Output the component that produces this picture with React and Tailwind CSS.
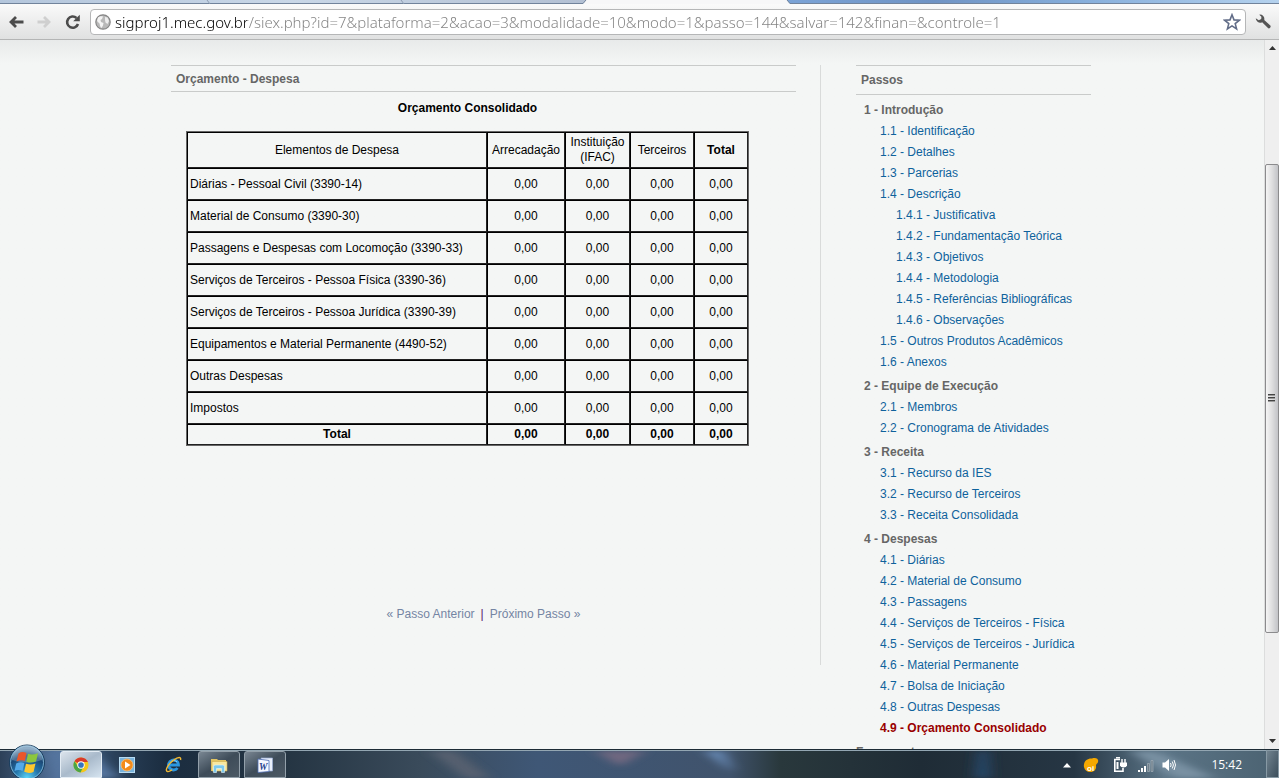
import React, { useState } from 'react';

const rows = [
  'Diárias - Pessoal Civil (3390-14)',
  'Material de Consumo (3390-30)',
  'Passagens e Despesas com Locomoção (3390-33)',
  'Serviços de Terceiros - Pessoa Física (3390-36)',
  'Serviços de Terceiros - Pessoa Jurídica (3390-39)',
  'Equipamentos e Material Permanente (4490-52)',
  'Outras Despesas',
  'Impostos',
];

const columns = ['arrecadacao', 'instituicao', 'terceiros', 'total'];

const sections = [
  {
    title: '1 - Introdução',
    items: [
      { label: '1.1 - Identificação' },
      { label: '1.2 - Detalhes' },
      { label: '1.3 - Parcerias' },
      { label: '1.4 - Descrição' },
      { label: '1.4.1 - Justificativa', nested: true },
      { label: '1.4.2 - Fundamentação Teórica', nested: true },
      { label: '1.4.3 - Objetivos', nested: true },
      { label: '1.4.4 - Metodologia', nested: true },
      { label: '1.4.5 - Referências Bibliográficas', nested: true },
      { label: '1.4.6 - Observações', nested: true },
      { label: '1.5 - Outros Produtos Acadêmicos' },
      { label: '1.6 - Anexos' },
    ],
  },
  {
    title: '2 - Equipe de Execução',
    items: [{ label: '2.1 - Membros' }, { label: '2.2 - Cronograma de Atividades' }],
  },
  {
    title: '3 - Receita',
    items: [
      { label: '3.1 - Recurso da IES' },
      { label: '3.2 - Recurso de Terceiros' },
      { label: '3.3 - Receita Consolidada' },
    ],
  },
  {
    title: '4 - Despesas',
    items: [
      { label: '4.1 - Diárias' },
      { label: '4.2 - Material de Consumo' },
      { label: '4.3 - Passagens' },
      { label: '4.4 - Serviços de Terceiros - Física' },
      { label: '4.5 - Serviços de Terceiros - Jurídica' },
      { label: '4.6 - Material Permanente' },
      { label: '4.7 - Bolsa de Iniciação' },
      { label: '4.8 - Outras Despesas' },
      { label: '4.9 - Orçamento Consolidado', current: true },
    ],
  },
];

const TabStrip = () => (
  <div className="flex h-1 shrink-0 bg-[#f7f7f8]">
    <svg className="h-1 w-full" viewBox="0 0 1279 4" preserveAspectRatio="none">
      <defs>
        <linearGradient id="tabs" x1="0" x2="1" y1="0" y2="0">
          <stop offset="0" stopColor="#b4c6dc" />
          <stop offset=".5" stopColor="#c9d7e7" />
          <stop offset="1" stopColor="#b3c0d3" />
        </linearGradient>
        <linearGradient id="glass" x1="0" x2="1" y1="0" y2="0">
          <stop offset="0" stopColor="#7ba3d6" />
          <stop offset=".3" stopColor="#6f93c4" />
          <stop offset=".6" stopColor="#86aedb" />
          <stop offset="1" stopColor="#b5d2ee" />
        </linearGradient>
      </defs>
      <path d="M0 0H586L583 4H0z" fill="url(#tabs)" />
      <path d="M787 0H1279V4H790z" fill="url(#glass)" />
      <path d="M0 3.5H583L586 0M787 0L790 3.5H1279" stroke="#71839b" fill="none" />
      <path d="M207 0l3 4M401 0l3 4" stroke="#8e9db2" />
    </svg>
  </div>
);

const Toolbar = () => {
  const [url, setUrl] = useState(
    'sigproj1.mec.gov.br/siex.php?id=7&plataforma=2&acao=3&modalidade=10&modo=1&passo=144&salvar=142&finan=&controle=1'
  );

  return (
    <div className="flex h-9 shrink-0 items-center border-b border-[#b4b5b5] bg-linear-to-b from-[#fafafa] to-[#e0e1e1] pr-2 pl-2">
      <button type="button" aria-label="Voltar" className="flex h-6 w-7 items-center">
        <svg width="16" height="16" viewBox="0 0 16 16" fill="none" stroke="#4c4c4c" strokeWidth="2.8">
          <path d="M8 3L3 8L8 13M2.5 8H15.5" />
        </svg>
      </button>
      <button type="button" aria-label="Avançar" className="flex h-6 w-7 items-center">
        <svg width="16" height="16" viewBox="0 0 16 16" fill="none" stroke="#cfcfcf" strokeWidth="2.8">
          <path d="M8 3L13 8L8 13M13.5 8H1.5" />
        </svg>
      </button>
      <button type="button" aria-label="Recarregar" className="flex h-6 w-6 items-center">
        <svg width="17" height="16" viewBox="0 0 17 16">
          <path d="M12.5 4A5.6 5.6 0 1 0 14 10" fill="none" stroke="#4c4c4c" strokeWidth="2.6" />
          <path d="M15.8 .8V7.2H9.200z" fill="#4c4c4c" />
        </svg>
      </button>
      <div className="ml-0.5 flex h-[26px] min-w-0 flex-1 items-center rounded border border-[#b5b6b7] bg-white px-1">
        <svg width="16" height="16" viewBox="0 0 16 16" className="shrink-0">
          <circle cx="8" cy="8" r="7.2" fill="#b9b9b9" stroke="#858585" strokeWidth="1.2" />
          <path d="M3 3.5C5 1.8 7 2 8 2.5L7 5L5.500 6L6 8L8.500 9L8 11.500L6.500 14C5 13 5 11 4.500 9.500L2 7z" fill="#f4f4f4" />
          <path d="M10 3L12.500 3.500L14 7L12.500 10L10.500 8.500L10 6z" fill="#eeeeee" />
        </svg>
        <input
          type="text"
          aria-label="Endereço"
          value={url}
          onChange={(e) => setUrl(e.target.value)}
          className="ml-1 h-6 min-w-0 flex-1 bg-linear-to-r from-black from-[132px] to-[#808080] to-[132px] bg-clip-text font-['Noto_Sans',sans-serif] text-[15px] font-light text-transparent caret-black outline-none"
        />
        <button type="button" aria-label="Adicionar aos favoritos">
          <svg width="18" height="18" viewBox="0 0 18 18" fill="#fff" stroke="#626d88" strokeWidth="1.6">
            <path d="M9 1.8L11 6.900L16.400 7.200L12.200 10.600L13.600 15.900L9 12.900L4.400 15.900L5.800 10.600L1.600 7.200L7 6.900z" />
          </svg>
        </button>
      </div>
      <button type="button" aria-label="Ferramentas" className="ml-[9px] flex w-4 shrink-0">
        <svg width="17" height="17" viewBox="0 0 17 17">
          <path d="M4.5 1.2A4.700 4.700 0 0 1 9.800 7L16 12.600A1.700 1.700 0 0 1 13.500 15.200L7.600 9.300A4.700 4.700 0 0 1 .8 5L4 7.200L6.600 5.800L6.800 3.400z" fill="#555" />
        </svg>
      </button>
    </div>
  );
};

const cellClass = 'border border-t-black border-r-[#222] border-b-[#222] border-l-black';

const Budget = () => (
  <main className="w-[625px] shrink-0">
    <h2 className="border-y border-[#c9cbca] px-[5px] pt-[5px] pb-1 text-xs leading-4 font-bold text-[#666]">
      Orçamento - Despesa
    </h2>
    <div className="ml-[15px] w-[563px]">
      <h3 className="mt-2 mb-[15px] text-center text-xs leading-4 font-bold">Orçamento Consolidado</h3>
      <table className="w-full table-fixed border-separate border-spacing-0 border border-[#666] text-center text-xs leading-[15px]">
        <colgroup>
          <col className="w-[300px]" />
          <col className="w-[78px]" />
          <col className="w-[65px]" />
          <col className="w-[64px]" />
          <col />
        </colgroup>
        <thead>
          <tr className="h-9">
            <th className={`${cellClass} font-normal`}>Elementos de Despesa</th>
            <th className={`${cellClass} font-normal`}>Arrecadação</th>
            <th className={`${cellClass} font-normal`}>
              Instituição
              <br />
              (IFAC)
            </th>
            <th className={`${cellClass} font-normal`}>Terceiros</th>
            <th className={`${cellClass} font-bold`}>Total</th>
          </tr>
        </thead>
        <tbody>
          {rows.map((row) => (
            <tr key={row} className="h-8">
              <td className={`${cellClass} pl-0.5 text-left whitespace-nowrap`}>{row}</td>
              {columns.map((col) => (
                <td key={col} className={cellClass}>0,00</td>
              ))}
            </tr>
          ))}
        </tbody>
        <tfoot>
          <tr className="h-[21px] font-bold">
            <td className={cellClass}>Total</td>
            {columns.map((col) => (
              <td key={col} className={cellClass}>0,00</td>
            ))}
          </tr>
        </tfoot>
      </table>
    </div>
    <nav className="mt-40 mb-[43px] flex justify-center gap-1.5 text-xs leading-4 text-[#7485a3]">
      <a href="#anterior">« Passo Anterior</a>
      <span className="text-[#551a6b]">|</span>
      <a href="#proximo">Próximo Passo »</a>
    </nav>
  </main>
);

const Steps = () => (
  <aside className="w-[235px] shrink-0 text-xs">
    <h2 className="mb-[5px] border-y border-[#c9cbca] px-[5px] py-[6px] leading-4 font-bold text-[#666]">Passos</h2>
    {sections.map((section) => (
      <section key={section.title} className="mb-[3px] pl-2 leading-[21px] whitespace-nowrap">
        <h3 className="font-bold text-[#666]">{section.title}</h3>
        <ul className="pl-4">
          {section.items.map((item) => (
            <li key={item.label} className={item.nested ? 'pl-4' : ''}>
              <a href="#passo" className={item.current ? 'font-bold text-[#990000]' : 'text-[#0e629c]'}>
                {item.label}
              </a>
            </li>
          ))}
        </ul>
      </section>
    ))}
    <h2 className="leading-[21px] font-bold text-[#666]">Ferramentas</h2>
  </aside>
);

const Scrollbar = () => (
  <div className="flex w-[15px] shrink-0 flex-col border-l border-[#dcdddd] bg-[#efefef]">
    <div className="flex h-4 items-center justify-center">
      <svg width="7" height="4" viewBox="0 0 7 4"><path d="M3.5 0L7 4H0z" fill="#333" /></svg>
    </div>
    <div className="flex-[108]" />
    <div className="flex flex-[469] items-center justify-center rounded-[2px] border border-[#8b8b8d] bg-linear-to-r from-[#f5f5f5] via-[#dededf] to-[#c2c3c7]">
      <svg width="8" height="9" viewBox="0 0 8 9"><path d="M0 .5h7M0 3.500h7M0 6.500h7" stroke="#444" /><path d="M0 1.500h7M0 4.500h7M0 7.500h7" stroke="#999" /></svg>
    </div>
    <div className="flex-[100]" />
    <div className="flex h-4 items-center justify-center">
      <svg width="7" height="4" viewBox="0 0 7 4"><path d="M0 0H7L3.500 4z" fill="#333" /></svg>
    </div>
  </div>
);

const ChromeIcon = () => (
  <svg width="16" height="16" viewBox="0 0 16 16">
    <circle cx="8" cy="8" r="7.5" fill="#f5c71c" />
    <path d="M8 8L1.500 4.200A7.500 7.500 0 0 1 14.900 5H8z" fill="#d93a2b" />
    <path d="M1.500 4.200A7.500 7.500 0 0 0 7.500 15.500L10.500 9.500L5 9.500z" fill="#4aa546" />
    <circle cx="8" cy="8" r="3.7" fill="#fff" />
    <circle cx="8" cy="8" r="2.8" fill="#3573c0" />
  </svg>
);

const PlayerIcon = () => (
  <svg width="16" height="16" viewBox="0 0 16 16">
    <rect x=".5" y=".5" width="15" height="15" fill="#79b3dc" stroke="#b7dbf2" />
    <circle cx="8" cy="8" r="6" fill="#f38b1a" stroke="#fbc27a" strokeWidth=".8" />
    <path d="M6 4.500L11.500 8L6 11.500z" fill="#fff" />
  </svg>
);

const ExplorerIcon = () => (
  <svg width="17" height="17" viewBox="0 0 17 17" fill="none">
    <path d="M4.500 9H13.500A5 5 0 1 0 12.500 12" stroke="#2b96df" strokeWidth="2.8" />
    <path d="M5 7A4.200 4.200 0 0 1 12 6" stroke="#8fd3fa" strokeWidth="1" />
    <path d="M2.500 15.500C-1 15 4 7 9 3.800C13 .8 16.500 .5 15.500 4M2.500 15.500C4 16 6 14.500 7 13.800" stroke="#f0b833" strokeWidth="1.4" />
  </svg>
);

const FolderIcon = () => (
  <svg width="18" height="16" viewBox="0 0 18 16">
    <path d="M1 2H7L8 3H16V14H1z" fill="#e3c563" />
    <path d="M2 4.500H17V14H2z" fill="#f8e8a0" stroke="#cfac4d" strokeWidth=".6" />
    <path d="M3.500 15.500V9.500Q3.500 8 5 8H13Q14.500 8 14.500 9.500V15.500H11.500V11.500H6.500V15.500z" fill="#7cc9ec" stroke="#e2f5fd" strokeWidth=".6" />
  </svg>
);

const WordIcon = () => (
  <svg width="17" height="16" viewBox="0 0 17 16">
    <path d="M4 1H15.500V14H6z" fill="#e9effa" stroke="#9aadd6" strokeWidth=".7" />
    <path d="M1 2L12 3.500V14.500L1 15.500z" fill="#f5f8ff" stroke="#4d6cb3" strokeWidth=".8" />
    <text x="2" y="12.5" fontSize="9.5" fontWeight="bold" fontStyle="italic" fontFamily="Liberation Serif, serif" fill="#24418e">W</text>
  </svg>
);

const taskClass = 'flex h-full w-[42px] items-center justify-center rounded-t-[3px] border';

const Taskbar = () => (
  <footer className="relative flex h-[29px] shrink-0 items-stretch border-t border-[#1c2b35] bg-linear-to-r from-[#3d5775] via-[#42597a] via-45% to-[#4d6474] font-['Open_Sans',sans-serif]">
    {/* blurred wallpaper seen through the bar */}
    <svg className="absolute inset-0 h-full w-full border-t border-[#93a6b2]" viewBox="0 0 1279 28" preserveAspectRatio="none">
      <defs>
        <filter id="soft" x="-20%" y="-50%" width="140%" height="200%"><feGaussianBlur stdDeviation="7 3" /></filter>
        <linearGradient id="wall" x1="0" x2="1" y1="0" y2="0">
          <stop offset="0" stopColor="#2c4058" />
          <stop offset=".045" stopColor="#52719a" />
          <stop offset=".09" stopColor="#294059" />
          <stop offset=".13" stopColor="#1b2d40" />
          <stop offset=".22" stopColor="#243442" />
          <stop offset=".33" stopColor="#3a4b5b" />
          <stop offset=".42" stopColor="#3f5776" />
          <stop offset=".57" stopColor="#40536c" />
          <stop offset=".61" stopColor="#29383c" />
          <stop offset=".72" stopColor="#1f2c36" />
          <stop offset=".84" stopColor="#263644" />
          <stop offset=".91" stopColor="#5b7486" />
          <stop offset="1" stopColor="#4b6271" />
        </linearGradient>
      </defs>
      <rect width="1279" height="28" fill="url(#wall)" />
      <g filter="url(#soft)">
        <path d="M430 0H455L490 28H465z" fill="#56616f" />
        <path d="M595 0H645L620 16z" fill="#6f6880" />
        <path d="M705 0H722L733 22z" fill="#6c90bd" />
        <path d="M978 0H988L990 28H975z" fill="#28486c" />
        <path d="M1130 0H1155L1215 28H1175z" fill="#7991a3" />
        <path d="M45 0H90L120 28H60z" fill="#54749e" />
      </g>
    </svg>

    <button type="button" aria-label="Iniciar" className="absolute -top-[6px] left-2">
      <svg width="38" height="36" viewBox="0 0 38 36">
        <defs>
          <radialGradient id="orb" cx=".5" cy=".95" r=".85">
            <stop offset="0" stopColor="#5ed8fa" />
            <stop offset=".4" stopColor="#2476ac" />
            <stop offset=".75" stopColor="#1b4876" />
            <stop offset="1" stopColor="#7399b9" />
          </radialGradient>
        </defs>
        <circle cx="19" cy="18.5" r="17.5" fill="url(#orb)" stroke="#1a3e5e" />
        <circle cx="19" cy="18.5" r="16.5" fill="none" stroke="#8ec3e0" strokeWidth=".8" />
        <path d="M4 16A15 15 0 0 1 34 16Q19 21 4 16z" fill="#fff" opacity=".22" />
        <path d="M10.500 9.500Q14 7 18.500 9L16.800 17Q13 15.500 8.500 17.500z" fill="#e9562a" />
        <path d="M20 9.800Q24.500 11.500 30 9.200L28 17.500Q23 19.500 18.300 17.700z" fill="#8cc63d" />
        <path d="M8.200 19.500Q12.500 17.200 16.400 19L14.600 27Q10.500 25.200 6.500 27z" fill="#55a9e8" />
        <path d="M18 19.800Q22.800 21.500 27.500 19.500L25.500 28Q21 30 16.200 27.800z" fill="#fdc82f" />
      </svg>
    </button>

    <div className="relative ml-[60px] flex gap-1 pt-px">
      <button type="button" aria-label="Google Chrome" className={`${taskClass} border-[#e3ecf4] bg-linear-to-br from-[#dce4ec] via-[#a9bacb] to-[#d5e3ef]`}>
        <ChromeIcon />
      </button>
      <button type="button" aria-label="Media Player" className={`${taskClass} border-transparent`}>
        <PlayerIcon />
      </button>
      <button type="button" aria-label="Internet Explorer" className={`${taskClass} border-transparent`}>
        <ExplorerIcon />
      </button>
      <button type="button" aria-label="Windows Explorer" className={`${taskClass} border-[#93a0aa] bg-linear-to-br from-[#7a8793] via-[#3e4c59] to-[#4c5964]`}>
        <FolderIcon />
      </button>
      <button type="button" aria-label="Word" className={`${taskClass} border-[#93a0aa] bg-linear-to-br from-[#7a8793] via-[#3e4c59] to-[#4c5964]`}>
        <WordIcon />
      </button>
    </div>

    <div className="relative ml-auto flex items-center pt-0.5 text-white">
      <svg width="8" height="5" viewBox="0 0 8 5" className="mr-3"><path d="M4 0L8 4.500H0z" fill="#fff" /></svg>
      <svg width="16" height="16" viewBox="0 0 16 16" className="mr-[14px]">
        <path d="M1 10C0 5 4 1 9 1.500C13 0 16 2 15 5C14.500 7 13 6.500 13 9C13.500 11 12.500 13.500 10 14.500C6 16 2 14.500 1 10z" fill="#f5a800" />
        <text x="4" y="14" fontSize="8" fontWeight="bold" fontFamily="Liberation Sans, sans-serif" fill="#fff">oi</text>
      </svg>
      <svg width="15" height="16" viewBox="0 0 15 16" className="mr-[10px]" fill="none" stroke="#fff">
        <path d="M7 2.500H1.800V14.200H10V11" strokeWidth="1.6" />
        <path d="M3.500 5H5.500V12H3.500z" fill="#fff" stroke="none" />
        <path d="M3 .8H7" strokeWidth="1.5" />
        <path d="M9 2V6M12 2V6" strokeWidth="1.4" />
        <path d="M7 5.500H14V8.500Q13.500 10.500 10.500 10.500Q7.500 10.500 7 8.500z" fill="#fff" stroke="none" />
      </svg>
      <svg width="16" height="13" viewBox="0 0 16 13" className="mr-2">
        <path d="M0 11h2v2H0zM3 9h2v4H3zM6 7h2v6H6z" fill="#fff" />
        <path d="M9.500 4.500h2v8h-2zM13 1.500h2v11h-2z" fill="#6f7f8b" stroke="#a2afb8" strokeWidth=".7" />
      </svg>
      <svg width="14" height="14" viewBox="0 0 14 14" fill="none" stroke="#fff">
        <path d="M.5 4.500H3L7 1V13L3 9.500H.5z" fill="#fff" stroke="none" />
        <path d="M8.500 5Q9.800 7 8.500 9M10.300 3.500Q12.500 7 10.300 10.500M12 2Q15 7 12 12" />
      </svg>
      <time className="ml-[35px] text-xs leading-4">15:42</time>
    </div>
    <button type="button" aria-label="Mostrar área de trabalho" className="relative ml-6 w-[13px] border border-[#8799a4] bg-linear-to-br from-[#71838f] to-[#3c4e5b]" />
  </footer>
);

const App = () => {
  return (
    <div className="flex h-screen flex-col overflow-hidden bg-[#f4f6f5] font-['Liberation_Sans',Arial,sans-serif] text-black">
      <TabStrip />
      <Toolbar />
      <div className="flex min-h-0 flex-1">
        <div className="flex-1 overflow-hidden bg-linear-to-b from-[#e8eaea] to-[#f4f6f5] to-[24px] pr-0.5">
          <div className="mx-auto flex max-w-[920px] items-start justify-between pt-[25px]">
            <div className="flex shrink-0 border-r border-[#d9dbda] pr-6">
              <Budget />
            </div>
            <Steps />
          </div>
        </div>
        <Scrollbar />
      </div>
      <Taskbar />
    </div>
  );
};

export default App;
